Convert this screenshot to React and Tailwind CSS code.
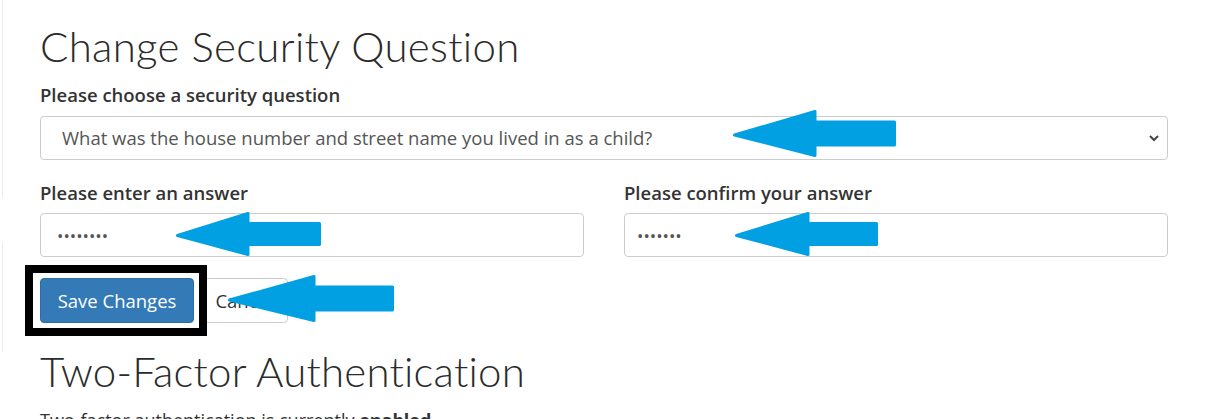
import React from "react";

// Callout arrow pointing left; (x, y) is the tip position on the page.
function Arrow({ x, y, headW, headH, shaftW, shaftH }) {
  const s = 3;
  const w = headW + shaftW;
  const h = headH;
  const d = [
    `M ${s / 2} ${h / 2 + s / 2}`,
    `L ${headW} ${s / 2}`,
    `L ${headW} ${h / 2 - shaftH / 2 + s / 2}`,
    `L ${w - s / 2} ${h / 2 - shaftH / 2 + s / 2}`,
    `L ${w - s / 2} ${h / 2 + shaftH / 2 - s / 2}`,
    `L ${headW} ${h / 2 + shaftH / 2 - s / 2}`,
    `L ${headW} ${h - s / 2}`,
    "Z",
  ].join(" ");
  return (
    <svg
      className="absolute pointer-events-none"
      style={{ left: x, top: y - h / 2 - s / 2, width: w, height: h + s }}
      viewBox={`0 0 ${w} ${h + s}`}
    >
      <path d={d} fill="#00a0e3" stroke="#00a0e3" strokeWidth={s} strokeLinejoin="round" />
    </svg>
  );
}

export default function App() {
  return (
    <div className="relative h-[419px] w-[1213px] overflow-hidden bg-white font-['Open_Sans',sans-serif] text-[#333]">
      <div className="flex">
        {/* faint sidebar edge */}
        <div className="flex w-[40px] shrink-0 flex-col pl-[2px]">
          <div className="h-[197px] w-px bg-[#ececec]" />
          <div className="mt-[46px] h-[109px] w-px bg-[#ececec]" />
        </div>

        <div className="w-[1128px]">
          <h2 className="mt-[24px] font-['Lato',sans-serif] text-[42px] font-light leading-[44px] tracking-[0.3px] text-[#2b2b2b]">
            Change Security Question
          </h2>

          <label className="mt-[14px] block text-[18.5px] font-semibold leading-[26px]">
            Please choose a security question
          </label>
          <div className="relative mt-[8px]">
            <select
              className="block h-[44px] w-full appearance-none rounded-[4px] border border-[#cccccc] bg-white pl-[21px] text-[18.5px] text-[#555] outline-none"
              defaultValue="house"
            >
              <option value="house">What was the house number and street name you lived in as a child?</option>
            </select>
            <svg
              className="pointer-events-none absolute right-[8px] top-[16px] h-[12px] w-[12px]"
              viewBox="0 0 12 12"
              fill="none"
              stroke="#444"
              strokeWidth="2"
            >
              <path d="M2 4 L6 8 L10 4" />
            </svg>
          </div>

          <div className="mt-[20px] grid grid-cols-2 gap-[40px]">
            <div>
              <label className="block text-[18.5px] font-semibold leading-[26px]">Please enter an answer</label>
              <input
                type="password"
                readOnly
                value="abcdefgh"
                className="mt-[7px] block h-[44px] w-full rounded-[4px] border border-[#cccccc] bg-white pl-[16px] text-[17px] text-[#555] outline-none"
              />
            </div>
            <div>
              <label className="block text-[18.5px] font-semibold leading-[26px]">Please confirm your answer</label>
              <input
                type="password"
                readOnly
                value="abcdefg"
                className="mt-[7px] block h-[44px] w-full rounded-[4px] border border-[#cccccc] bg-white pl-[12px] text-[17px] text-[#555] outline-none"
              />
            </div>
          </div>

          <div className="mt-[21px] flex gap-[6px]">
            <button className="h-[45px] w-[154px] rounded-[4px] border border-[#2e6da4] bg-[#337ab7] text-[18.5px] text-white">
              Save Changes
            </button>
            <button className="h-[45px] w-[88px] rounded-[4px] border border-[#cccccc] bg-white text-[18.5px] text-[#333]">
              Cancel
            </button>
          </div>

          <h2 className="mt-[26px] font-['Lato',sans-serif] text-[42px] font-light leading-[44px] tracking-[0.2px] text-[#2b2b2b]">
            Two-Factor Authentication
          </h2>
          <p className="mt-[14px] text-[18px] leading-[26px]">
            Two-factor authentication is currently <strong className="font-bold">enabled</strong>.
          </p>
        </div>
      </div>

      {/* highlight frame around the save button */}
      <div className="pointer-events-none absolute left-[25px] top-[265px] h-[71px] w-[182px] border-[8px] border-black" />

      <Arrow x={733} y={135} headW={82} headH={47} shaftW={81} shaftH={26} />
      <Arrow x={176} y={235} headW={72} headH={44} shaftW={73} shaftH={24} />
      <Arrow x={735} y={235} headW={73} headH={44} shaftW={70} shaftH={24} />
      <Arrow x={228} y={300} headW={86} headH={47} shaftW={80} shaftH={26} />
    </div>
  );
}
